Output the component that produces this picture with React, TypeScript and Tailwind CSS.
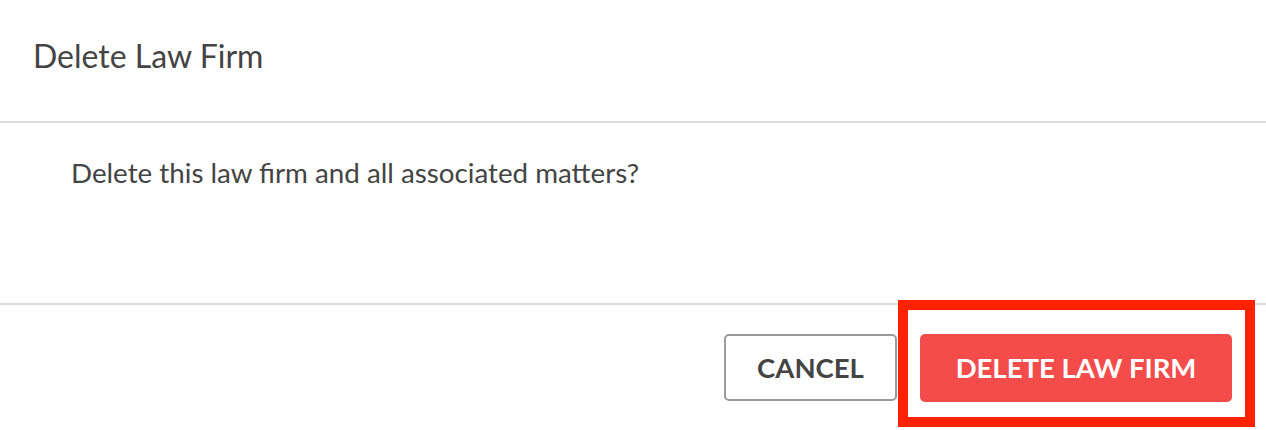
import React from 'react';

const App: React.FC = () => {
  return (
    <div className="w-[1266px] h-[430px] bg-white text-[#444444] overflow-hidden" style={{ fontFamily: 'Lato, "Open Sans", sans-serif' }}>
      {/* header */}
      <div className="h-[123px] border-b-2 border-[#dddddd] px-[33px] pt-[37px]">
        <h1 className="text-[32px] leading-[1.2] font-normal">Delete Law Firm</h1>
      </div>

      {/* body */}
      <div className="h-[182px] border-b-2 border-[#dddddd] px-[71px] pt-[33px]">
        <p className="text-[27.75px] leading-[1.2]">Delete this law firm and all associated matters?</p>
      </div>

      {/* footer */}
      <div className="flex justify-end items-start pt-[29px] pr-[34px] gap-[23px]">
        <button className="w-[173px] h-[67px] rounded-[5px] border-2 border-[#9a9a9a] bg-white text-[27.5px] font-bold text-[#444444] flex items-center justify-center">
          CANCEL
        </button>
        <div className="relative">
          <button className="w-[312px] h-[68px] rounded-[5px] bg-[#f44b4b] text-[27.5px] font-bold text-white flex items-center justify-center">
            DELETE LAW FIRM
          </button>
          <div className="absolute -left-[22px] -top-[34px] -right-[23px] -bottom-[25px] border-[10px] border-[#ff2200] pointer-events-none"></div>
        </div>
      </div>
    </div>
  );
};

export default App;
